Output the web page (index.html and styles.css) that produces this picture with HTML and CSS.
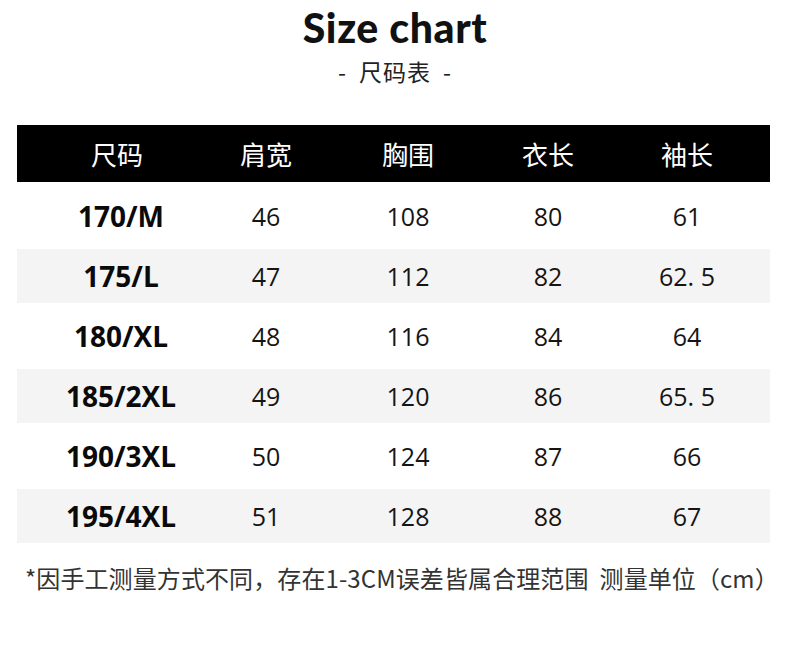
FILE: index.html
```html
<!DOCTYPE html>
<html lang="zh-CN">
<head>
<meta charset="utf-8">
<title>Size chart</title>
<link rel="stylesheet" href="styles.css">
</head>
<body>
<div class="page">
  <h1 class="title">Size chart</h1>
  <div class="subtitle"><span class="dash">-</span>尺码表<span class="dash">-</span></div>
  <div class="chart">
    <div class="row head">
      <div class="cell">尺码</div><div class="cell">肩宽</div><div class="cell">胸围</div><div class="cell">衣长</div><div class="cell">袖长</div>
    </div>
    <div class="body">
      <div class="row"><div class="cell size">170/M</div><div class="cell">46</div><div class="cell">108</div><div class="cell">80</div><div class="cell">61</div></div>
      <div class="row shade"><div class="cell size">175/L</div><div class="cell">47</div><div class="cell">112</div><div class="cell">82</div><div class="cell">62. 5</div></div>
      <div class="row"><div class="cell size">180/XL</div><div class="cell">48</div><div class="cell">116</div><div class="cell">84</div><div class="cell">64</div></div>
      <div class="row shade"><div class="cell size">185/2XL</div><div class="cell">49</div><div class="cell">120</div><div class="cell">86</div><div class="cell">65. 5</div></div>
      <div class="row"><div class="cell size">190/3XL</div><div class="cell">50</div><div class="cell">124</div><div class="cell">87</div><div class="cell">66</div></div>
      <div class="row shade"><div class="cell size">195/4XL</div><div class="cell">51</div><div class="cell">128</div><div class="cell">88</div><div class="cell">67</div></div>
    </div>
  </div>
  <p class="note">*因手工测量方式不同，存在1-3CM误差皆属合理范围&nbsp; 测量单位（cm）</p>
</div>
</body>
</html>
```
FILE: styles.css
```css
html, body {
  margin: 0;
  padding: 0;
  background: #ffffff;
}
.page {
  width: 790px;
  height: 672px;
  font-family: "Noto Sans CJK SC", "Noto Sans", sans-serif;
  color: #111;
}
.title {
  margin: 0;
  padding-top: 6px;
  text-align: center;
  font-family: Lato, "Liberation Sans", sans-serif;
  font-weight: 900;
  font-size: 41px;
  line-height: 44px;
  letter-spacing: 0.6px;
  color: #111;
}
.subtitle {
  text-align: center;
  font-size: 23px;
  line-height: 30px;
  margin-top: 6px;
  color: #222;
  letter-spacing: 1px;
}
.dash {
  margin: 0 12px;
}
.chart {
  margin: 39px 20px 0 17px;
}
.row {
  display: grid;
  grid-template-columns: 146px 144px 140px 140px 138px;
  padding-left: 31px;
  align-items: center;
  height: 54px;
}
.head {
  background: #000;
  height: 57px;
  color: #fff;
  font-size: 26px;
}
.head .cell:first-child {
  transform: translateX(-4px);
}
.body {
  display: flex;
  flex-direction: column;
  gap: 6px;
  padding-top: 7px;
}
.shade {
  background: #f4f4f4;
}
.cell {
  text-align: center;
  font-family: "Open Sans", "Noto Sans", sans-serif;
  font-size: 25px;
  color: #151515;
}
.head .cell {
  font-family: "Noto Sans CJK SC", sans-serif;
  color: #fff;
  font-size: 26px;
}
.cell.size {
  font-weight: 700;
  font-size: 28px;
  color: #0a0a0a;
}
.note {
  margin: 20px 0 0 25px;
  font-size: 24px;
  line-height: 30px;
  letter-spacing: 0.1px;
  color: #333;
  white-space: nowrap;
}
```
